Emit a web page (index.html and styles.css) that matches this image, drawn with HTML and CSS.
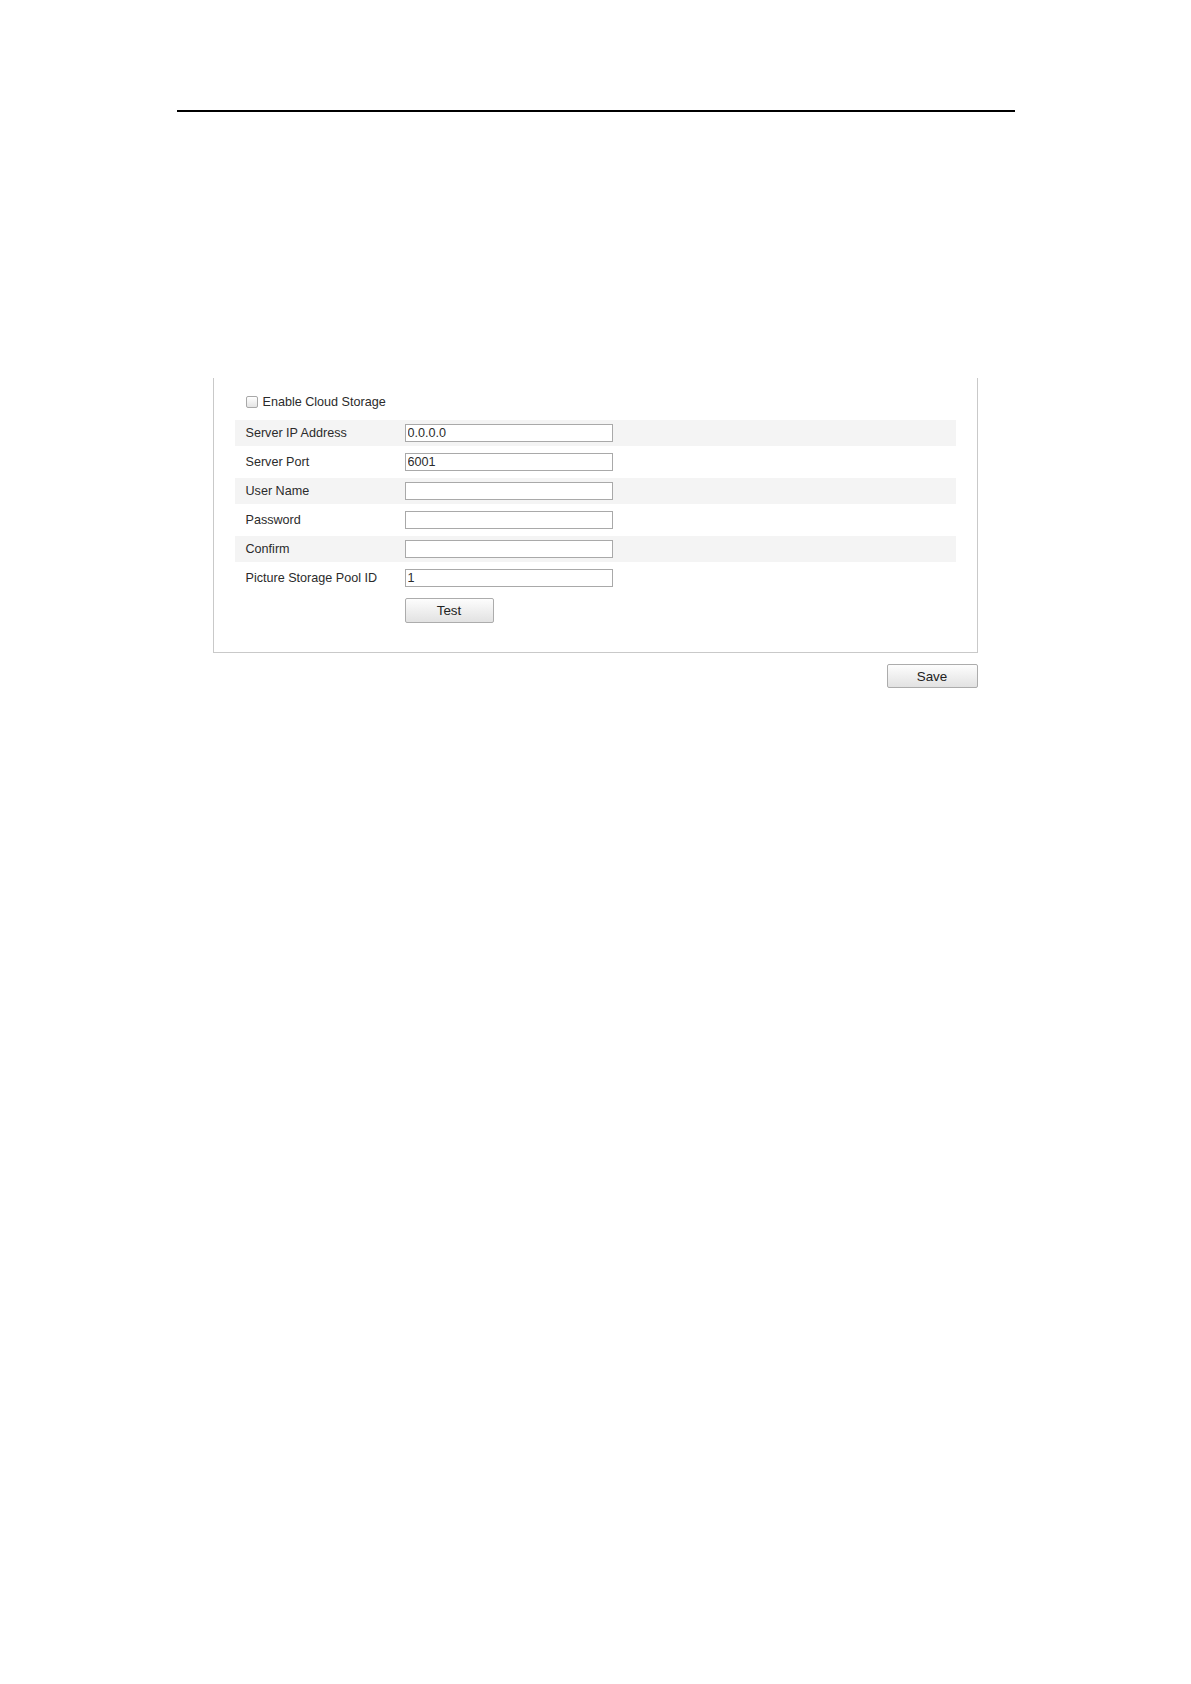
FILE: index.html
```html
<!DOCTYPE html>
<html lang="en">
<head>
  <meta charset="UTF-8" />
  <title>Cloud Storage</title>
  <link rel="stylesheet" href="styles.css">
</head>
<body>
  <div class="page">
    <div class="rule"></div>

    <div class="settings">
      <div class="panel">
        <label class="check-row">
          <span class="checkbox" aria-hidden="true"></span>
          <span>Enable Cloud Storage</span>
        </label>

        <div class="rows">
          <div class="row shaded">
            <span class="label">Server IP Address</span>
            <input class="field" type="text" value="0.0.0.0">
          </div>
          <div class="row">
            <span class="label">Server Port</span>
            <input class="field" type="text" value="6001">
          </div>
          <div class="row shaded">
            <span class="label">User Name</span>
            <input class="field" type="text" value="">
          </div>
          <div class="row">
            <span class="label">Password</span>
            <input class="field" type="password" value="">
          </div>
          <div class="row shaded">
            <span class="label">Confirm</span>
            <input class="field" type="password" value="">
          </div>
          <div class="row">
            <span class="label">Picture Storage Pool ID</span>
            <input class="field" type="text" value="1">
          </div>
        </div>

        <div class="test-row">
          <button class="btn btn-test" type="button">Test</button>
        </div>
      </div>

      <div class="actions">
        <button class="btn btn-save" type="button">Save</button>
      </div>
    </div>
  </div>
</body>
</html>
```

FILE: styles.css
```css
* {
  box-sizing: border-box;
}

body {
  margin: 0;
  background: #ffffff;
  color: #2b2b2b;
  font-family: "Liberation Sans", Arial, sans-serif;
  font-size: 12.6px;
}

.page {
  width: 838px;
  margin: 0 auto;
  padding-top: 110px;
}

.rule {
  height: 2px;
  background: #000000;
}

.settings {
  width: 765px;
  margin: 266px 0 0 36px;
}

.panel {
  border: 1px solid #c9c9c9;
  border-top: none;
  padding: 11px 21px 29px 21px;
}

.check-row {
  display: flex;
  align-items: center;
  gap: 5px;
  height: 26px;
  margin-bottom: 5px;
  padding-left: 11px;
}

.checkbox {
  width: 12px;
  height: 12px;
  border: 1px solid #a8a8a8;
  border-radius: 2px;
  background: linear-gradient(#ffffff, #e4e4e4);
}

.rows {
  display: flex;
  flex-direction: column;
  gap: 3px;
}

.row {
  display: flex;
  align-items: center;
  height: 26px;
}

.row.shaded {
  background: #f4f4f4;
}

.label {
  width: 170px;
  padding-left: 11px;
}

.field {
  width: 208px;
  height: 18px;
  margin: 0;
  padding: 0 2px;
  border: 1px solid #a9a9a9;
  border-radius: 0;
  background: #ffffff;
  font-family: inherit;
  font-size: 12.6px;
  color: #2b2b2b;
  outline: none;
}

.test-row {
  margin-top: 7px;
  padding-left: 170px;
}

.btn {
  margin: 0;
  padding: 0;
  border: 1px solid #acacac;
  border-radius: 2px;
  background: linear-gradient(#fdfdfd, #e2e2e2);
  font-family: "Liberation Sans", Arial, sans-serif;
  font-size: 13.4px;
  color: #222222;
  cursor: pointer;
}

.btn-test {
  width: 89px;
  height: 25px;
}

.actions {
  display: flex;
  justify-content: flex-end;
  margin-top: 11px;
}

.btn-save {
  width: 91px;
  height: 24px;
}
```
